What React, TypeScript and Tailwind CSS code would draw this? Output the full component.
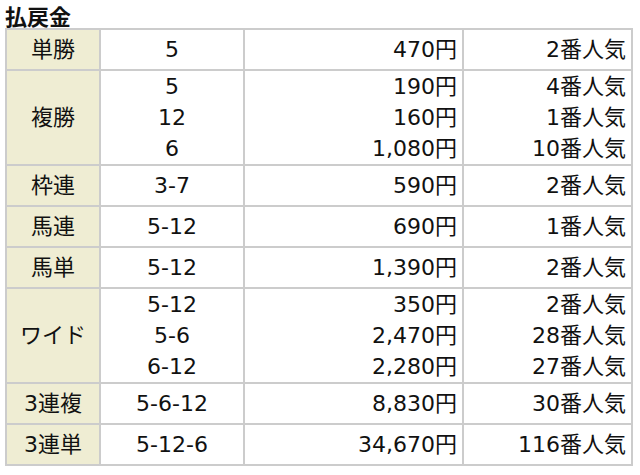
import * as React from "react"

type Payout = {
  kind: string
  rows: { combo: string; amount: string; rank: string }[]
}

const PAYOUTS: Payout[] = [
  { kind: "単勝", rows: [{ combo: "5", amount: "470円", rank: "2番人気" }] },
  {
    kind: "複勝",
    rows: [
      { combo: "5", amount: "190円", rank: "4番人気" },
      { combo: "12", amount: "160円", rank: "1番人気" },
      { combo: "6", amount: "1,080円", rank: "10番人気" },
    ],
  },
  { kind: "枠連", rows: [{ combo: "3-7", amount: "590円", rank: "2番人気" }] },
  { kind: "馬連", rows: [{ combo: "5-12", amount: "690円", rank: "1番人気" }] },
  { kind: "馬単", rows: [{ combo: "5-12", amount: "1,390円", rank: "2番人気" }] },
  {
    kind: "ワイド",
    rows: [
      { combo: "5-12", amount: "350円", rank: "2番人気" },
      { combo: "5-6", amount: "2,470円", rank: "28番人気" },
      { combo: "6-12", amount: "2,280円", rank: "27番人気" },
    ],
  },
  { kind: "3連複", rows: [{ combo: "5-6-12", amount: "8,830円", rank: "30番人気" }] },
  { kind: "3連単", rows: [{ combo: "5-12-6", amount: "34,670円", rank: "116番人気" }] },
]

// 1行だけの券種はセル高さ固定、複数行は行間のみで詰める
function Cell({
  lines,
  align,
  single,
  className = "",
}: {
  lines: string[]
  align: "center" | "right"
  single: boolean
  className?: string
}) {
  return (
    <div
      className={`flex flex-col justify-center ${single ? "h-[39px]" : "py-0"} ${
        align === "center" ? "items-center" : "items-end pr-[5px]"
      } ${className}`}
    >
      {lines.map((line, i) => (
        <span key={i} className="leading-[31px]">
          {line}
        </span>
      ))}
    </div>
  )
}

export default function App() {
  return (
    <div
      className="h-[475px] w-[640px] bg-white pl-[5px] text-[#111111]"
      style={{ fontFamily: '"DejaVu Sans", "Noto Sans CJK JP", sans-serif' }}
    >
      <h2
        className="h-[28px] pt-[3px] text-[22px] font-bold leading-[24px]"
        style={{ fontFamily: '"Noto Sans CJK JP", sans-serif' }}
      >
        払戻金
      </h2>
      <div className="grid w-[628px] grid-cols-[92px_142px_217px_167px] gap-[2px] border-2 border-[#cccccc] bg-[#cccccc] text-[22px]">
        {PAYOUTS.map((p) => {
          const single = p.rows.length === 1
          return (
            <React.Fragment key={p.kind}>
              <Cell lines={[p.kind]} align="center" single={single} className="bg-[#efedd3]" />
              <Cell lines={p.rows.map((r) => r.combo)} align="center" single={single} className="bg-white" />
              <Cell lines={p.rows.map((r) => r.amount)} align="right" single={single} className="bg-white" />
              <Cell lines={p.rows.map((r) => r.rank)} align="right" single={single} className="bg-white" />
            </React.Fragment>
          )
        })}
      </div>
    </div>
  )
}
